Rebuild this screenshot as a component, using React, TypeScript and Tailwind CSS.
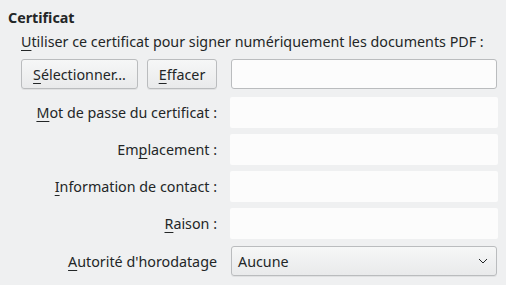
import React from 'react';

function Mn({ children }: { children: React.ReactNode }) {
  return <span className="underline underline-offset-[3px] decoration-1">{children}</span>;
}

function Button({ children, width }: { children: React.ReactNode; width: string }) {
  return (
    <button
      className={`${width} h-[30px] rounded-[3px] border border-[#babcbe] bg-gradient-to-b from-[#f6f7f7] to-[#e9eaeb] shadow-[0_1px_0_rgba(0,0,0,0.06)] text-[#232627] flex items-center justify-center`}
    >
      {children}
    </button>
  );
}

function Field() {
  return <div className="h-[31px] bg-[#fcfcfc] rounded-[2px]" />;
}

function Label({ children }: { children: React.ReactNode }) {
  return <div className="h-[31px] flex items-center justify-end">{children}</div>;
}

export default function App() {
  return (
    <div
      className="w-[506px] h-[285px] bg-[#eff0f1] text-[#232627] text-[14.3px] leading-[19px] overflow-hidden"
      style={{ fontFamily: '"Noto Sans", "DejaVu Sans", sans-serif' }}
    >
      <div className="pl-2 pt-[8px] font-bold">Certificat</div>
      <div className="pl-[21px] mt-[5px]">
        <Mn>U</Mn>tiliser ce certificat pour signer numériquement les documents PDF :
      </div>

      <div className="flex items-center mt-[8px] pl-[21px] pr-[9px]">
        <Button width="w-[117px]">
          <span>
            <Mn>S</Mn>électionner...
          </span>
        </Button>
        <div className="ml-[9px]">
          <Button width="w-[70px]">
            <span>
              <Mn>E</Mn>ffacer
            </span>
          </Button>
        </div>
        <div className="ml-[14px] flex-1 h-[30px] rounded-[3px] border border-[#babcbe] bg-[#fcfcfc]" />
      </div>

      <div className="grid grid-cols-[217px_1fr] gap-x-[13px] gap-y-[6px] mt-[8px] pr-[8px]">
        <Label>
          <span>
            <Mn>M</Mn>ot de passe du certificat :
          </span>
        </Label>
        <Field />
        <Label>
          <span>
            Em<Mn>p</Mn>lacement :
          </span>
        </Label>
        <Field />
        <Label>
          <span>
            <Mn>I</Mn>nformation de contact :
          </span>
        </Label>
        <Field />
        <Label>
          <span>
            <Mn>R</Mn>aison :
          </span>
        </Label>
        <Field />
      </div>

      <div className="grid grid-cols-[217px_1fr] gap-x-[14px] mt-[7px] pr-[9px]">
        <div className="h-[30px] flex items-center justify-end">
          <span>
            <Mn>A</Mn>utorité d'horodatage
          </span>
        </div>
        <div className="h-[30px] rounded-[3px] border border-[#babcbe] bg-gradient-to-b from-[#f6f7f7] to-[#e9eaeb] shadow-[0_1px_0_rgba(0,0,0,0.06)] flex items-center justify-between pl-[6px] pr-[7px]">
          <span>Aucune</span>
          <svg width="10" height="6" viewBox="0 0 10 6" className="mr-[1px]">
            <path d="M1 1 L5 5 L9 1" fill="none" stroke="#232627" strokeWidth="1" />
          </svg>
        </div>
      </div>
    </div>
  );
}
